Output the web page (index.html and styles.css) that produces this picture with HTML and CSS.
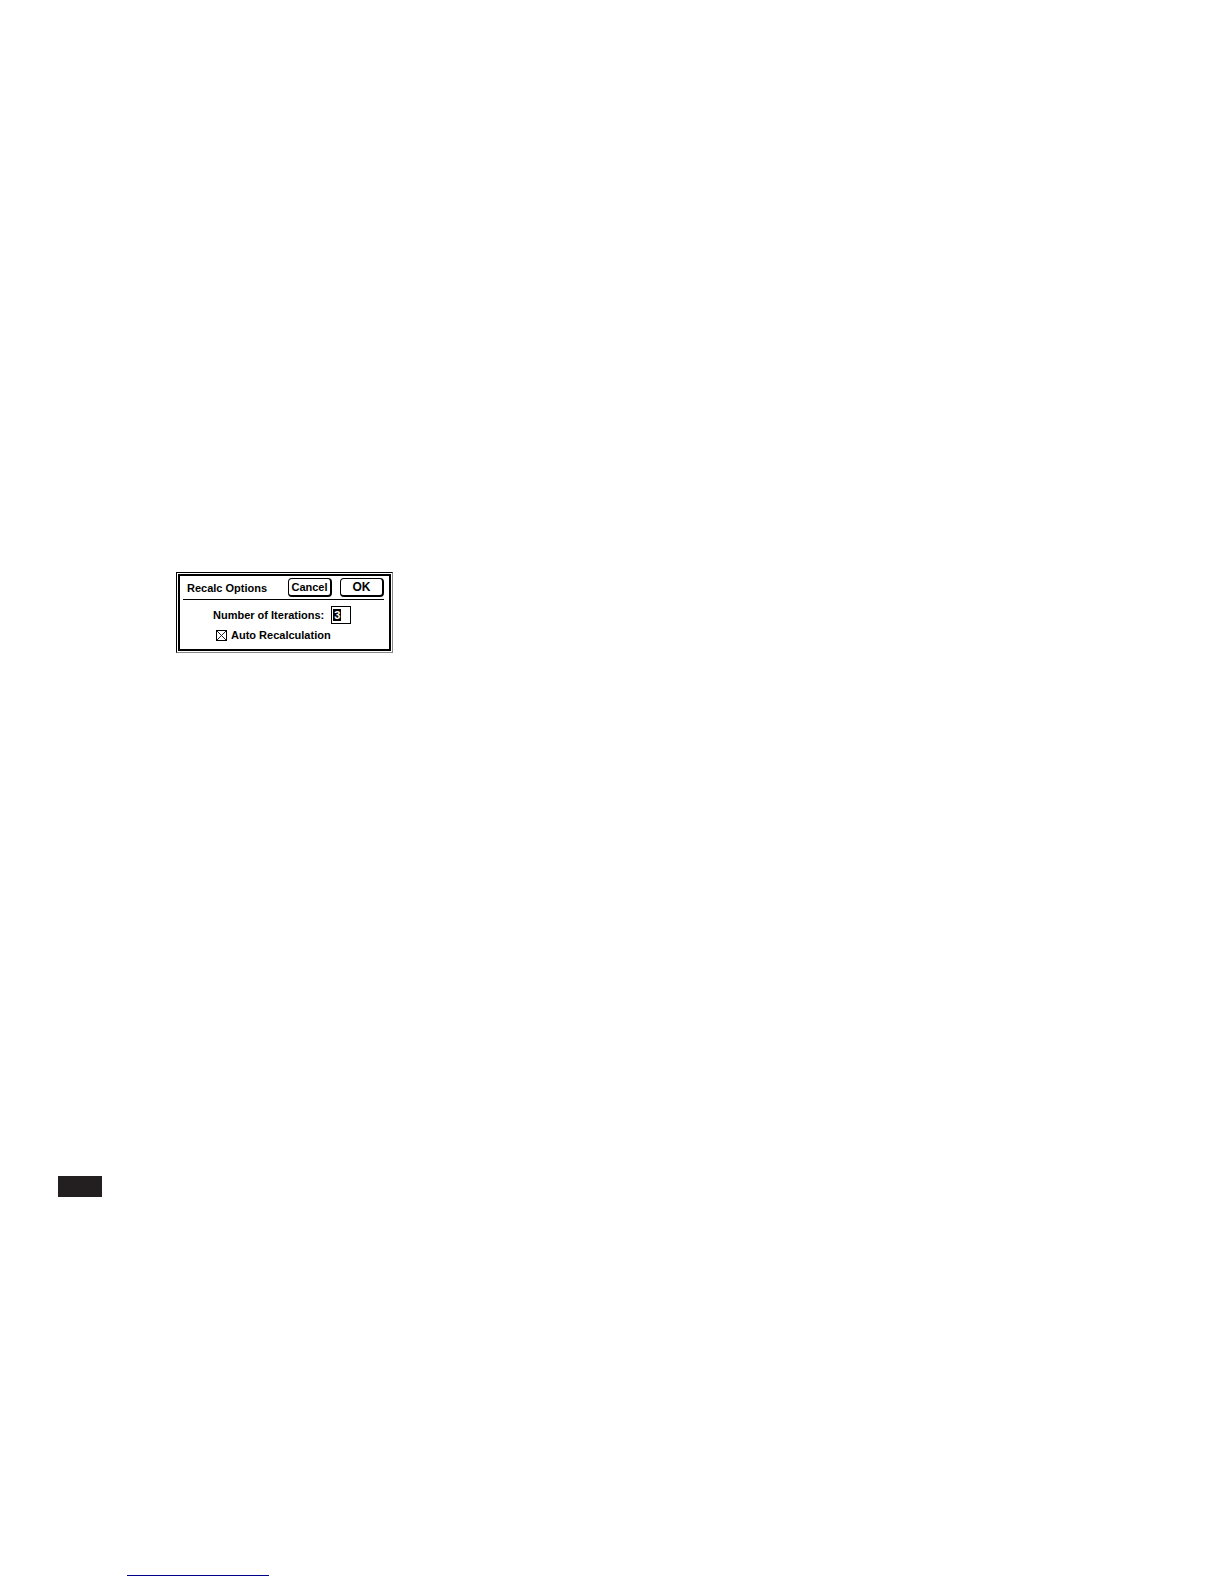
FILE: index.html
```html
<!DOCTYPE html>
<html lang="en">
<head>
    <meta charset="UTF-8">
    <meta name="viewport" content="width=device-width, initial-scale=1.0">
    <title>Recalc Options</title>
    <link rel="stylesheet" href="styles.css">
</head>
<body>

<main class="page">
    <form class="dialog">
        <div class="dialog-inner">
            <div class="dialog-header">
                <h1>Recalc Options</h1>
                <button type="button">Cancel</button>
                <button type="submit" class="ok">OK</button>
            </div>
            <div class="dialog-body">
                <div class="field">
                    <label for="iterations">Number of Iterations:</label>
                    <input type="text" id="iterations" class="number" value="3">
                </div>
                <div class="field check-field">
                    <input type="checkbox" id="auto-recalc" class="check" checked>
                    <label for="auto-recalc">Auto Recalculation</label>
                </div>
            </div>
        </div>
    </form>
    <div class="page-tab"></div>
</main>

<footer class="footer">
    <a href="#" class="footer-link" aria-label="Top of page"></a>
</footer>

</body>
</html>
```
FILE: styles.css
```css
* {
    box-sizing: border-box;
}

body {
    margin: 0;
    min-height: 100vh;
    display: flex;
    flex-direction: column;
    justify-content: space-between;
    background-color: #fff;
    color: #000;
    font-family: "Liberation Sans", Arial, sans-serif;
    font-size: 11px;
    font-weight: bold;
    line-height: 14px;
}

.page {
    padding: 572px 58px 0;
}

/* Double frame: thin line outside, thick line inside */
.dialog {
    width: fit-content;
    margin-left: 118px;
    padding: 1px;
    border: 1px solid #000;
    border-right-color: #888;
    border-bottom-color: #888;
}

.dialog-inner {
    padding: 2px 5px 7px 3px;
    border: 2px solid #000;
}

.dialog-header {
    display: flex;
    align-items: center;
    gap: 8px;
    padding-bottom: 2px;
    border-bottom: 1px solid #000;
}

.dialog-header h1 {
    margin: 0;
    padding-left: 4px;
    min-width: 97px;
    font-size: 11px;
}

button {
    width: 44px;
    height: 19px;
    padding: 0;
    background-color: #fff;
    color: #000;
    border: 1px solid #000;
    border-right-width: 2px;
    border-bottom-width: 2px;
    border-radius: 4px;
    font: inherit;
}

.ok {
    font-size: 12px;
}

.dialog-body {
    padding: 6px 0 0 30px;
}

.field {
    display: flex;
    align-items: center;
    gap: 7px;
}

.check-field {
    gap: 4px;
    margin-top: 4px;
    padding-left: 3px;
}

/* The value is shown selected */
.number {
    width: 20px;
    height: 18px;
    padding: 0 2px;
    border: 1px solid #000;
    border-radius: 0;
    background: linear-gradient(#000, #000) 1px 2px / 8px 12px no-repeat #fff;
    color: #fff;
    font: inherit;
    outline: none;
}

.check {
    appearance: none;
    width: 11px;
    height: 11px;
    margin: 0;
    border: 1px solid #000;
    border-radius: 0;
    background-color: #fff;
}

.check:checked {
    background-image:
        linear-gradient(45deg, transparent 46%, #222 46%, #222 54%, transparent 54%),
        linear-gradient(-45deg, transparent 46%, #222 46%, #222 54%, transparent 54%);
}

.page-tab {
    width: 44px;
    height: 21px;
    margin-top: 523px;
    background-color: #231f20;
}

.footer {
    padding: 0 127px 8px;
}

.footer-link {
    display: block;
    width: 142px;
    height: 16px;
    border-bottom: 1px solid #00008b;
}
```
